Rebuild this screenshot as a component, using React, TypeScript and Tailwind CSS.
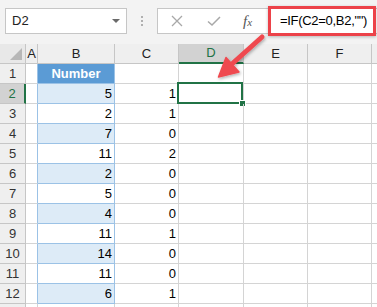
import React from "react";

const colW = [26, 12, 77, 64, 65, 64, 64, 6];
const letters = ["", "A", "B", "C", "D", "E", "F", ""];
const data: [number, number][] = [
  [5, 1],
  [2, 1],
  [7, 0],
  [11, 2],
  [2, 0],
  [5, 0],
  [4, 0],
  [11, 1],
  [14, 0],
  [11, 0],
  [6, 1],
];

function HeaderRow() {
  return (
    <div className="flex h-[20px]">
      <div className="relative w-[26px] shrink-0 bg-[#e8e8e8] border-r border-b border-[#c6c6c6]">
        <div className="absolute right-[3px] bottom-[3px] w-0 h-0 border-l-[12px] border-l-transparent border-b-[12px] border-b-[#b7b7b7]" />
      </div>
      {letters.slice(1).map((l, i) => {
        const w = colW[i + 1];
        const sel = l === "D";
        return (
          <div
            key={i}
            style={{ width: w }}
            className={
              sel
                ? "shrink-0 flex items-center justify-center bg-[#d2d2d2] border-r border-[#c6c6c6] border-b-2 border-b-[#217346] text-[#217346] text-[13px]"
                : "shrink-0 flex items-center justify-center bg-[#efefef] border-r border-b border-[#c6c6c6] text-[#222] text-[13px]"
            }
          >
            {l}
          </div>
        );
      })}
    </div>
  );
}

function Row({ n, b, c, label = true }: { n: number; b?: number; c?: number; label?: boolean }) {
  const selRow = n === 2;
  const even = n % 2 === 0;
  const isHead = n === 1;
  const inTable = n >= 1 && n <= 12;
  const bBg = isHead ? "bg-[#5b9bd5]" : even && inTable ? "bg-[#ddebf7]" : "bg-white";
  return (
    <div className="flex h-[20px]">
      <div
        className={
          selRow
            ? "w-[26px] shrink-0 flex items-center justify-center bg-[#d2d2d2] border-b border-[#c6c6c6] border-r-2 border-r-[#217346] text-[#217346] text-[13px]"
            : "w-[26px] shrink-0 flex items-center justify-center bg-[#efefef] border-b border-r border-[#c6c6c6] text-[#333] text-[13px]"
        }
      >
        {label ? n : null}
      </div>
      <div
        className={
          inTable
            ? "w-[12px] shrink-0 border-b border-b-[#d4d4d4] border-r border-r-[#9bc2e6]"
            : "w-[12px] shrink-0 border-b border-r border-[#d4d4d4]"
        }
      />
      <div
        className={`w-[77px] shrink-0 flex items-center ${
          isHead ? "justify-center text-white font-bold" : "justify-end pr-[2px] text-black"
        } ${bBg} border-b border-r ${inTable ? "border-[#9bc2e6]" : "border-[#d4d4d4]"} text-[13px]`}
      >
        {isHead ? "Number" : b}
      </div>
      <div className="w-[64px] shrink-0 flex items-center justify-end pr-[2px] border-b border-r border-[#d4d4d4] text-[13px] text-black">
        {c}
      </div>
      <div className="relative w-[65px] shrink-0 border-b border-r border-[#d4d4d4]">
        {selRow && (
          <>
            <div className="absolute left-[-2px] top-[-2px] w-[66px] h-[22px] border-2 border-[#217346]" />
            <div className="absolute left-[60px] top-[16px] w-[7px] h-[7px] bg-[#217346] border border-white" />
          </>
        )}
      </div>
      <div className="w-[64px] shrink-0 border-b border-r border-[#d4d4d4]" />
      <div className="w-[64px] shrink-0 border-b border-r border-[#d4d4d4]" />
      <div className="flex-1 border-b border-[#d4d4d4]" />
    </div>
  );
}

export default function App() {
  return (
    <div
      className="relative w-[377px] h-[307px] overflow-hidden bg-white select-none"
      style={{ fontFamily: '"Liberation Sans", Arial, sans-serif' }}
    >
      <div className="h-[44px] bg-[#f3f3f3] flex items-start pt-[8px] pl-[5px]">
        <div className="w-[122px] h-[26px] bg-white border border-[#c6c6c6] flex items-center justify-between pl-[6px] pr-[6px]">
          <span className="text-[13px] text-[#222]">D2</span>
          <div className="w-0 h-0 border-l-[4px] border-l-transparent border-r-[4px] border-r-transparent border-t-[4px] border-t-[#6a6a6a]" />
        </div>
        <div className="w-[30px] h-[26px] flex flex-col items-center justify-center gap-[2px]">
          <div className="w-[2px] h-[2px] bg-[#b0b0b0]" />
          <div className="w-[2px] h-[2px] bg-[#b0b0b0]" />
          <div className="w-[2px] h-[2px] bg-[#b0b0b0]" />
        </div>
        <div className="flex-1 h-[26px] bg-white border border-r-0 border-[#c6c6c6] flex items-center">
          <svg width="12" height="12" viewBox="0 0 12 12" className="ml-[13px]">
            <path d="M1 1 L11 11 M11 1 L1 11" stroke="#a8a8a8" strokeWidth="1.3" />
          </svg>
          <svg width="14" height="12" viewBox="0 0 14 12" className="ml-[24px]">
            <path d="M1 6.5 L5 10 L13 2" stroke="#a8a8a8" strokeWidth="1.5" fill="none" />
          </svg>
          <span
            className="ml-[22px] text-[15px] italic text-[#555]"
            style={{ fontFamily: '"Liberation Serif", "Times New Roman", serif' }}
          >
            f<span className="text-[11px]">x</span>
          </span>
        </div>
      </div>

      <div className="absolute left-[268px] top-[6px] w-[108px] h-[30px] border-[3px] border-[#ec4249] bg-white flex items-center pl-[9px] shadow-[0_1px_3px_rgba(0,0,0,0.25)]">
        <span className="text-[13px] tracking-[-0.3px] text-black whitespace-nowrap">=IF(C2=0,B2,"")</span>
      </div>

      <HeaderRow />
      {[1, 2, 3, 4, 5, 6, 7, 8, 9, 10, 11, 12].map((n) => {
        const d = n >= 2 ? data[n - 2] : undefined;
        return <Row key={n} n={n} b={d?.[0]} c={d?.[1]} />;
      })}
      <Row n={13} label={false} />

      <svg className="absolute left-0 top-0 pointer-events-none" width="377" height="307">
        <defs>
          <filter id="sh" x="-50%" y="-50%" width="200%" height="200%">
            <feDropShadow dx="1" dy="1.5" stdDeviation="1.5" floodColor="#000" floodOpacity="0.3" />
          </filter>
        </defs>
        <g filter="url(#sh)">
          <path d="M262 37 L233 63" stroke="#ef4a50" strokeWidth="5" strokeLinecap="round" />
          <path d="M218.5 77 L226 57.5 L239 72 Z" fill="#ef4a50" stroke="#ef4a50" strokeWidth="1.5" strokeLinejoin="round" />
        </g>
      </svg>
    </div>
  );
}
